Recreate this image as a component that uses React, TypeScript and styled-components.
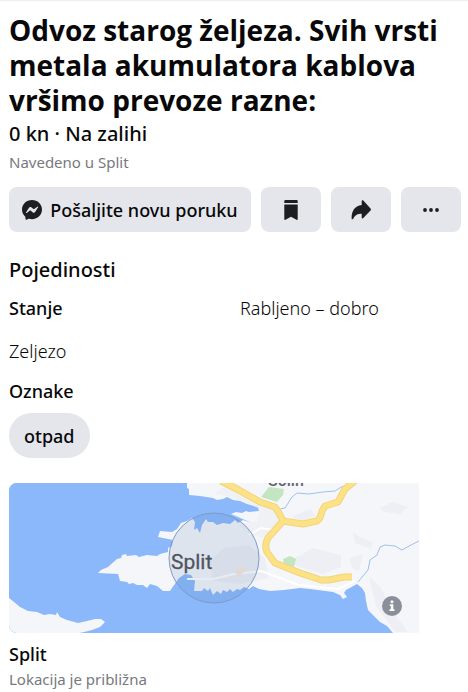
import React from "react";
import styled, { createGlobalStyle } from "styled-components";

const GlobalStyle = createGlobalStyle`
  * { box-sizing: border-box; }
  body {
    margin: 0;
    background: #fff;
    color: #080809;
    font-family: "Noto Sans", "Open Sans", sans-serif;
  }
  button { font: inherit; color: inherit; border: 0; cursor: pointer; }
  h1, h2, h3, p, dl, dd, dt { margin: 0; }
`;

const Page = styled.main`
  border-top: 1px solid #eeeeef;
  padding: 12px 7px 0 9px;
`;

const Title = styled.h1`
  font-family: "Open Sans", "Noto Sans", sans-serif;
  font-size: 28px;
  line-height: 35px;
  font-weight: 700;
`;

const Price = styled.p`
  font-size: 20px;
  line-height: 28px;
  font-weight: 500;
  margin-top: 2px;
`;

const Muted = styled.p`
  font-size: 15px;
  line-height: 20px;
  color: #77797d;
`;

const Listed = styled(Muted)`
  margin-top: 4px;
`;

const Actions = styled.div`
  display: flex;
  gap: 10px;
  margin-top: 15px;
`;

const ActionButton = styled.button<{ $wide?: boolean }>`
  flex: ${(p) => (p.$wide ? "1 1 auto" : "0 0 60px")};
  height: 45px;
  padding: 0;
  display: flex;
  align-items: center;
  justify-content: center;
  gap: 8px;
  border-radius: 8px;
  background: #e4e6eb;
  font-size: 18px;
  font-weight: 500;
  white-space: nowrap;
`;

const SectionTitle = styled.h2`
  font-size: 20px;
  line-height: 28px;
  font-weight: 500;
  margin-top: 24px;
`;

const Details = styled.dl`
  display: grid;
  grid-template-columns: 231px 1fr;
  margin-top: 12px;
  font-size: 18px;
  line-height: 24px;
`;

const Term = styled.dt`
  font-weight: 500;
`;

const Value = styled.dd`
  font-weight: 300;
`;

const Description = styled.p`
  margin-top: 19px;
  font-size: 18px;
  line-height: 24px;
  font-weight: 300;
`;

const Label = styled.h3<{ $gap: number }>`
  margin-top: ${(p) => p.$gap}px;
  font-size: 18px;
  line-height: 24px;
  font-weight: 500;
`;

const Tag = styled.button`
  height: 45px;
  margin-top: 10px;
  padding: 0 15px;
  border-radius: 23px;
  background: #e4e6eb;
  font-size: 18px;
  font-weight: 500;
`;

const MapFrame = styled.div`
  position: relative;
  max-width: 410px;
  height: 150px;
  margin-top: 25px;
  overflow: hidden;
  border-radius: 8px 0 0 8px;
  background: #8ab8fb;
`;

const MapDrawing = styled.svg`
  display: block;
  width: 100%;
  height: 100%;
`;

const InfoButton = styled.button`
  position: absolute;
  right: 17px;
  bottom: 17px;
  width: 20px;
  height: 20px;
  padding: 0;
  border-radius: 50%;
  background: #8a8f99;
`;

const MessengerIcon = () => (
  <svg width="20" height="20" viewBox="0 0 20 20" aria-hidden="true">
    <path
      fill="#1c1e21"
      d="M10 0C4.4 0 0 4.1 0 9.6c0 2.9 1.2 5.3 3.1 7 .2.2.3.4.3.6l.1 1.8c0 .6.6.9 1.1.7l2-.9c.2-.1.4-.1.5 0 .9.2 1.9.4 2.9.4 5.6 0 10-4.1 10-9.6S15.600 0 10 0z"
    />
    <path fill="#e4e6eb" d="M4 12.400l3-4.700c.5-.7 1.500-.9 2.200-.4l2.300 1.800c.2.200.5.200.7 0l3.200-2.400c.4-.3 1 .2.7.6l-3 4.700c-.5.7-1.500.9-2.200.4l-2.300-1.800c-.2-.2-.5-.2-.7 0l-3.200 2.400c-.4.300-1-.2-.7-.6z" />
  </svg>
);

const BookmarkIcon = () => (
  <svg width="20" height="20" viewBox="0 0 20 20" fill="#1c1e21" aria-hidden="true">
    <path d="M4.300 0h11.400a1 1 0 0 1 1 1v2H3.300V1a1 1 0 0 1 1-1zM3.300 4.600h13.400v14.600c0 .7-.7 1-1.200.6L10 16.700l-5.500 3.100c-.5.4-1.200.1-1.200-.6z" />
  </svg>
);

const ShareIcon = () => (
  <svg width="20" height="20" viewBox="0 0 20 20" fill="#1c1e21" aria-hidden="true">
    <path d="M10.700 1.200c0-.9 1-1.300 1.600-.7l7.200 8c.6.600.6 1.300 0 1.900l-7.200 7.700c-.6.600-1.600.2-1.600-.7v-3.600c-4 0-6.500 1.300-8.500 4.900-.4.900-1.600.7-1.600-.3C.5 11.500 3.400 5.700 10.700 5z" />
  </svg>
);

const DotsIcon = () => (
  <svg width="20" height="20" viewBox="0 0 20 20" fill="#1c1e21" aria-hidden="true">
    <circle cx="4" cy="10" r="1.900" />
    <circle cx="10" cy="10" r="1.900" />
    <circle cx="16" cy="10" r="1.900" />
  </svg>
);

const mainRoad = "M212 -2L228 6L251 19L266 24L270 30L274 38L259 55Q255 62 258 69L266 80L291 90L312 97H320L335 94H343";
const sideRoad = "M274 38L294 41L308 38Q312 35 313 28L316 23L329 19L336 6L346 -2";

const AreaMap = () => (
  <MapDrawing viewBox="0 0 410 150" preserveAspectRatio="xMidYMid slice" role="img" aria-label="Split">
    <rect width="410" height="150" fill="#8ab8fb" />
    <g fill="#f5f6fa">
      <path d="M0 115L5 119L11 124L19 128L28 129L35 132L41 131L47 132L48 129L51 134L58 137L69 140L78 138L86 136L92 136L96 139L91 144L83 147L71 150H0z" />
      <path d="M178 0L178 5L180 6V12L191 13L204 15L208 17L214 16L218 14L224 17L231 18L238 21L249 24L250 28L240 29L237 28L233 30L227 29L222 31L229 34L243 40L234 37L229 40L226 37L221 41L214 40L208 42L204 39L199 39L197 36L193 42L191 50L188 45L185 47L186 39L183 35L178 38L172 40L168 46L163 49L151 48L149 54L164 57L163 63L159 65V69L151 71L148 73L138 72L130 74L127 72L118 73L117 71L113 72L112 75L108 76L99 84L92 87L89 90L109 91L111 98L118 99L120 101L124 100L128 102L134 102L138 105L141 101L148 103L154 108H161L163 105L170 95L176 91L182 92L186 98L185 108H193L195 105L199 108L201 105L204 112L208 108L212 111L214 107L218 109L221 106L224 109L228 106L231 107L235 104L240 106L244 103L250 106L261 108L275 107L291 105L301 106L324 109L331 112L334 116L338 114L335 110L337 107L348 101L353 105L356 110L357 118L359 127L371 139L378 143L384 150H410V0z" />
    </g>
    <g fill="#ebecf1">
      <path d="M220 2L236 13L246 15L255 21L265 25L272 38L258 55L245 53L230 43L248 38L251 26L225 15L205 10z" opacity=".55" />
      <path d="M282 34L302 26L306 33L294 38zM278 76L291 73L303 65L332 72V84L314 91L288 83zM341 75L354 71L350 88L343 85zM344 49L353 55L364 59L362 66L346 60zM371 25L383 19L399 24L391 31L375 29zM360 94L371 103L382 126L399 149H386L367 123z" opacity=".7" />
      <path d="M200 78L215 65L240 62L256 75L260 95L232 101L204 98z" opacity=".7" />
    </g>
    <g fill="#c4e5c2">
      <path d="M252 14L260 4L275 6L274 12L268 19z" />
      <path d="M274 76L281 73L287 76L285 84L275 81z" />
    </g>
    <g fill="none" stroke="#9fc0ed" strokeWidth="1">
      <path d="M410 58L402 62L393 67L386 63L376 62L371 64L368 72L361 77L359 87L349 99" />
      <path d="M334 3L326 8L314 9L300 11L288 10L283 14L276 25L266 27" />
    </g>
    <g fill="none" stroke="#fff" strokeWidth="2">
      <path d="M178 96L204 96L225 91L253 88M252 88L290 102L329 106L346 98M240 52L252 45L265 47" />
    </g>
    <g fill="none" strokeLinejoin="round">
      <path d={mainRoad} stroke="#f2d47c" strokeWidth="7" />
      <path d={sideRoad} stroke="#f2d47c" strokeWidth="7" />
      <path d={mainRoad} stroke="#fce284" strokeWidth="5" />
      <path d={sideRoad} stroke="#fce284" strokeWidth="5" />
    </g>
    <path d="M226 90L232 83L238 86L230 94z" fill="#f8e9da" />
    <circle cx="205" cy="75" r="45" fill="#5777a8" fillOpacity=".14" stroke="#7f9acb" strokeWidth="1" />
    <text x="162" y="86" fontFamily="Roboto, sans-serif" fontSize="21" fontWeight="400" fill="#50545d" stroke="#50545d" strokeWidth="0.300">Split</text>
    <text x="259" y="3" fontFamily="Roboto, sans-serif" fontSize="16" fontWeight="500" fill="#62656d">Solin</text>
  </MapDrawing>
);

const InfoIcon = () => (
  <svg width="20" height="20" viewBox="0 0 20 20" fill="#fff" aria-hidden="true">
    <circle cx="10" cy="5.800" r="1.500" />
    <path d="M7.800 8.300h3.500v5h1.200v1.600H7.500v-1.600h1.300V9.900h-1z" />
  </svg>
);

const Approximate = styled(Muted)`
  margin-top: 3px;
`;

export default function App() {
  return (
    <>
      <GlobalStyle />
      <Page>
        <Title>Odvoz starog željeza. Svih vrsti metala akumulatora kablova vršimo prevoze razne:</Title>
        <Price>0 kn · Na zalihi</Price>
        <Listed>Navedeno u Split</Listed>
        <Actions>
          <ActionButton type="button" $wide>
            <MessengerIcon />
            Pošaljite novu poruku
          </ActionButton>
          <ActionButton type="button" aria-label="Spremi">
            <BookmarkIcon />
          </ActionButton>
          <ActionButton type="button" aria-label="Podijeli">
            <ShareIcon />
          </ActionButton>
          <ActionButton type="button" aria-label="Više">
            <DotsIcon />
          </ActionButton>
        </Actions>
        <SectionTitle>Pojedinosti</SectionTitle>
        <Details>
          <Term>Stanje</Term>
          <Value>Rabljeno – dobro</Value>
        </Details>
        <Description>Zeljezo</Description>
        <Label $gap={16}>Oznake</Label>
        <Tag type="button">otpad</Tag>
        <MapFrame>
          <AreaMap />
          <InfoButton type="button" aria-label="Informacije">
            <InfoIcon />
          </InfoButton>
        </MapFrame>
        <Label $gap={9}>Split</Label>
        <Approximate>Lokacija je približna</Approximate>
      </Page>
    </>
  );
}
